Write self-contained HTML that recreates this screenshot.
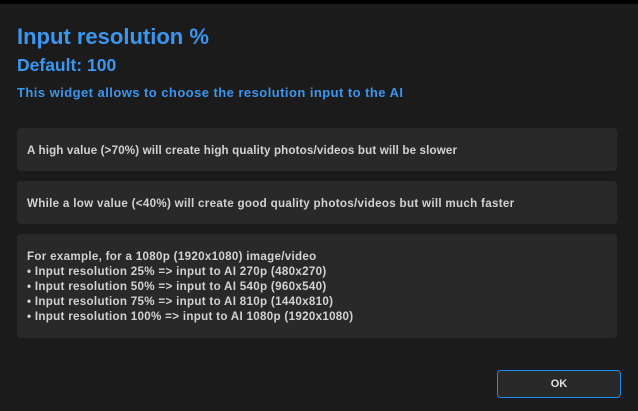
<html><head><style>
body{margin:0;width:638px;height:411px;background:#1b1b1b;font-family:"Liberation Sans",sans-serif;position:relative;overflow:hidden}
.top{position:absolute;left:0;top:0;width:638px;height:4px;background:#000}
.b{position:absolute;color:#3a96f0;font-weight:bold;left:17px;white-space:nowrap}
.box{position:absolute;left:17px;width:600px;background:#292929;border-radius:4px;color:#d2d2d2;font-size:11.6px;font-weight:bold;box-sizing:border-box;padding-left:10px;white-space:nowrap;letter-spacing:0.15px}
.ok{position:absolute;left:497px;top:370px;width:124px;height:28px;box-sizing:border-box;border:1px solid #1e8cf0;border-radius:4px;background:#292929;color:#e0e0e0;font-size:11px;font-weight:bold;text-align:center;line-height:26px}
</style></head><body>
<div class="top"></div>
<div class="b" style="top:24px;font-size:22px">Input resolution %</div>
<div class="b" style="top:55px;font-size:17.5px">Default: 100</div>
<div class="b" style="top:85px;font-size:13px;letter-spacing:0.45px">This widget allows to choose the resolution input to the AI</div>
<div class="box" style="top:128px;height:43px;line-height:45px">A high value (&gt;70%) will create high quality photos/videos but will be slower</div>
<div class="box" style="top:181px;height:43px;line-height:45px;letter-spacing:0.3px">While a low value (&lt;40%) will create good quality photos/videos but will much faster</div>
<div class="box" style="top:234px;height:104px;padding-top:15px;line-height:15px;letter-spacing:0.3px">For example, for a 1080p (1920x1080) image/video<br>• Input resolution 25% =&gt; input to AI 270p (480x270)<br>• Input resolution 50% =&gt; input to AI 540p (960x540)<br>• Input resolution 75% =&gt; input to AI 810p (1440x810)<br>• Input resolution 100% =&gt; input to AI 1080p (1920x1080)</div>
<div class="ok">OK</div>
</body></html>
